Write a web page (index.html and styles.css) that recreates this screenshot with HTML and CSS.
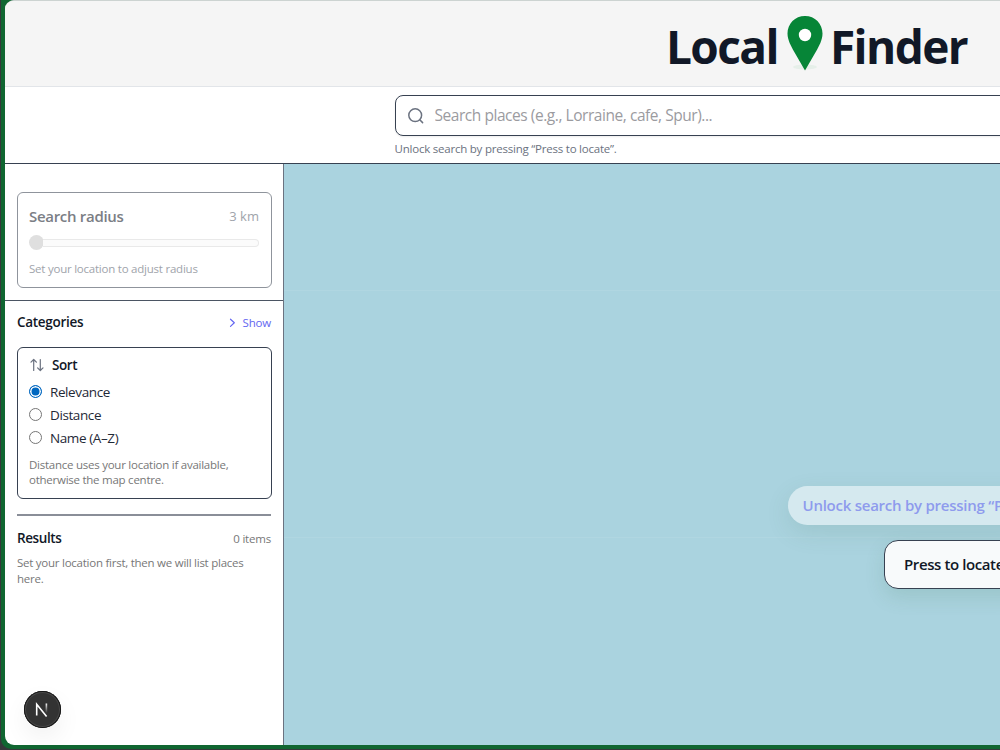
FILE: index.html
```
<!DOCTYPE html>
<html lang="en">
<head>
    <meta charset="UTF-8">
    <meta name="viewport" content="width=device-width, initial-scale=1.0">
    <title>Local Finder</title>
    <link rel="stylesheet" href="styles.css">
</head>
<body>
    <div class="frame">
        <div class="app">
            <header class="header">
                <h1 class="logo">
                    <span class="logo-text">Local</span>
                    <svg class="logo-pin" width="36" height="56" viewBox="0 0 36 56">
                        <ellipse cx="18" cy="51" rx="12" ry="2.5" fill="#e6efe9"/>
                        <path d="M18 0C8 0 .5 7.7.5 17.5c0 6.500 3.500 12.500 6.500 18L18 54.500l11-19c3-5.500 6.500-11.500 6.500-18C35.500 7.700 28 0 18 0z" fill="#068537"/>
                        <circle cx="18" cy="19" r="6.200" fill="#fff"/>
                    </svg>
                    <span class="logo-text">Finder</span>
                </h1>
            </header>

            <div class="search-bar">
                <div class="search">
                    <div class="search-box">
                        <svg width="18" height="18" viewBox="0 0 18 18" fill="none" stroke="#6b7280" stroke-width="1.500" stroke-linecap="round">
                            <circle cx="8.200" cy="8.200" r="6.400"/>
                            <path d="M13 13l2.600 2.600"/>
                        </svg>
                        <input class="search-input" type="text" placeholder="Search places (e.g., Lorraine, cafe, Spur)...">
                    </div>
                    <p class="search-hint">Unlock search by pressing “Press to locate”.</p>
                </div>
            </div>

            <div class="main">
                <aside class="sidebar">
                    <section class="radius-section">
                        <div class="card radius-card">
                            <div class="row">
                                <span class="radius-title">Search radius</span>
                                <span class="radius-value">3 km</span>
                            </div>
                            <div class="slider">
                                <span class="slider-thumb"></span>
                                <span class="slider-track"></span>
                            </div>
                            <p class="radius-hint">Set your location to adjust radius</p>
                        </div>
                    </section>

                    <section class="filters">
                        <div class="row">
                            <h2 class="title categories-title">Categories</h2>
                            <a class="show">
                                <svg width="7" height="10" viewBox="0 0 7 10" fill="none" stroke="#6366f1" stroke-width="1.200" stroke-linecap="round" stroke-linejoin="round">
                                    <path d="M1.500 1.200L5.300 4.800 1.500 8.400"/>
                                </svg>
                                <span>Show</span>
                            </a>
                        </div>

                        <div class="card sort-card">
                            <div class="sort-head">
                                <svg width="14" height="14" viewBox="0 0 14 14" fill="none" stroke="#6b7280" stroke-width="1.200" stroke-linecap="round" stroke-linejoin="round">
                                    <path d="M3.700 12.500V1.500M1 4.200l2.700-2.700 2.700 2.700M10.300 1.500v11M7.600 9.800l2.700 2.700L13 9.800"/>
                                </svg>
                                <h2 class="title">Sort</h2>
                            </div>
                            <label class="option"><span class="radio checked"></span><span>Relevance</span></label>
                            <label class="option"><span class="radio"></span><span>Distance</span></label>
                            <label class="option"><span class="radio"></span><span>Name (A–Z)</span></label>
                            <p class="note">Distance uses your location if available,<br>otherwise the map centre.</p>
                        </div>

                        <div class="results">
                            <div class="row">
                                <h2 class="title">Results</h2>
                                <span class="count">0 items</span>
                            </div>
                            <p class="note">Set your location first, then we will list places<br>here.</p>
                        </div>
                    </section>
                </aside>

                <div class="map">
                    <div class="map-actions">
                        <div class="map-hint">Unlock search by pressing “Press to locate”</div>
                        <button class="locate">Press to locate</button>
                    </div>
                </div>
            </div>
        </div>
        <div class="dev-badge">
            <svg width="37" height="37" viewBox="0 0 37 37" fill="none">
                <defs>
                    <linearGradient id="fade" x1="0" y1="12" x2="0" y2="22" gradientUnits="userSpaceOnUse">
                        <stop offset="0" stop-color="#fff"/>
                        <stop offset="1" stop-color="#fff" stop-opacity="0"/>
                    </linearGradient>
                </defs>
                <path d="M12.700 24.500V13.200L22.600 25.600" stroke="#fff" stroke-width="1.600"/>
                <path d="M22.400 12.500V22" stroke="url(#fade)" stroke-width="1.600"/>
            </svg>
        </div>
    </div>
</body>
</html>
```
FILE: styles.css
```
* {
    box-sizing: border-box;
}

body {
    font-family: "Open Sans", "Noto Sans", sans-serif;
    background: #35383a;
    color: #111827;
    margin: 0;
    height: 750px;
    overflow: hidden;
}

h1, h2, p {
    margin: 0;
}

.frame {
    position: relative;
    width: 1631px;
    height: 749px;
    margin-left: 1px;
    padding: 0 4px 4px;
    background: #106631;
    border-radius: 0 0 0 10px;
}

.app {
    display: flex;
    flex-direction: column;
    height: 745px;
    background: #fff;
    border-top: 1px solid #ccd3d1;
    border-radius: 9px;
    overflow: hidden;
}

.header {
    height: 86px;
    background: #f5f5f5;
    border-bottom: 1px solid #e2e5e9;
    display: flex;
    justify-content: center;
}

.logo {
    display: flex;
    align-items: flex-start;
    font-size: 46px;
    line-height: 60px;
    font-weight: 700;
    padding-top: 15px;
}

.logo-text {
    letter-spacing: -1.6px;
}

.logo-pin {
    margin: 0 7px 0 9px;
}

.search-bar {
    height: 77px;
    padding-top: 8px;
    border-bottom: 1px solid #374151;
    display: flex;
    justify-content: center;
}

.search {
    width: 844px;
}

.search-box {
    height: 41px;
    display: flex;
    align-items: center;
    gap: 10px;
    padding: 0 11px;
    border: 1px solid #374151;
    border-radius: 8px;
    box-shadow: 0 1px 2px rgba(0, 0, 0, 0.08);
}

.search-input {
    flex: 1;
    border: none;
    outline: none;
    padding: 0 0 2px;
    font-family: inherit;
    font-size: 15.5px;
    letter-spacing: -0.45px;
}

.search-input::placeholder {
    color: #9b9b9f;
}

.search-hint {
    margin-top: 5px;
    font-size: 11.5px;
    line-height: 16px;
    letter-spacing: -0.22px;
    color: #6b7280;
}

.main {
    flex: 1;
    display: flex;
}

.sidebar {
    width: 279px;
    border-right: 1px solid #6b7280;
}

.radius-section {
    height: 137px;
    padding: 28px 12px 0;
    border-bottom: 1px solid #4b5563;
}

.card {
    border: 1px solid #374151;
    border-radius: 6px;
    padding: 0 12px 0 11px;
    width: 255px;
}

.row {
    display: flex;
    justify-content: space-between;
    align-items: center;
}

.radius-card {
    height: 96px;
    padding-top: 11px;
    border-color: #8f949c;
}

.radius-title {
    font-size: 15px;
    line-height: 24px;
    font-weight: 600;
    color: #7b7e85;
    letter-spacing: -0.3px;
}

.radius-value {
    font-size: 13px;
    color: #a0a4ab;
}

.slider {
    display: flex;
    align-items: center;
    height: 15px;
    margin-top: 7px;
}

.slider-thumb {
    width: 15px;
    height: 15px;
    border-radius: 50%;
    background: #dfdfdf;
}

.slider-track {
    flex: 1;
    height: 8px;
    margin-left: -1px;
    background: #fbfbfb;
    border: 1px solid #e9e9e9;
    border-left: none;
    border-radius: 0 4px 4px 0;
}

.radius-hint {
    margin-top: 10px;
    font-size: 11.5px;
    line-height: 17px;
    letter-spacing: -0.23px;
    color: #a0a4ab;
}

.filters {
    padding: 11px 12px 0;
}

.title {
    font-size: 13.5px;
    line-height: 20px;
    font-weight: 600;
    letter-spacing: -0.4px;
}

.categories-title {
    letter-spacing: -0.3px;
}

.show {
    display: flex;
    align-items: center;
    gap: 7px;
    padding-top: 1px;
    margin-bottom: -1px;
    font-size: 11.5px;
    line-height: 20px;
    letter-spacing: -0.2px;
    color: #6366f1;
}

.sort-card {
    height: 152px;
    margin-top: 15px;
    padding-top: 7px;
}

.sort-head {
    display: flex;
    align-items: center;
    gap: 8px;
    padding-left: 1px;
    margin-bottom: 5px;
}

.option {
    display: flex;
    align-items: center;
    gap: 8px;
    height: 23.2px;
    font-size: 13.5px;
    letter-spacing: -0.4px;
    color: #1f2937;
}

.radio {
    width: 13px;
    height: 13px;
    border: 1px solid #767676;
    border-radius: 50%;
}

.radio.checked {
    border-color: #0067c0;
    background: #0067c0;
    box-shadow: inset 0 0 0 1.5px #fff;
}

.note {
    margin-top: 7px;
    font-size: 11.5px;
    line-height: 15.5px;
    letter-spacing: -0.25px;
    color: #777;
}

.results {
    margin-top: 15px;
    padding-top: 12px;
    border-top: 2px solid #8a8e98;
}

.count {
    font-size: 11.5px;
    letter-spacing: -0.2px;
    color: #777;
}

.map {
    flex: 1;
    display: flex;
    justify-content: center;
    /* tile seams */
    background:
        linear-gradient(#b0d6e1, #b0d6e1) 0 126px / 100% 1px no-repeat,
        linear-gradient(#b0d6e1, #b0d6e1) 0 373px / 100% 1px no-repeat,
        #aad3df;
}

.map-actions {
    padding-top: 322px;
    display: flex;
    flex-direction: column;
    align-items: center;
}

.map-hint {
    width: 337px;
    height: 39px;
    padding-left: 15px;
    border-radius: 20px;
    background: rgba(255, 255, 255, 0.5);
    box-shadow: 0 8px 24px rgba(60, 110, 70, 0.12);
    font-size: 15px;
    line-height: 39px;
    font-weight: 600;
    letter-spacing: -0.25px;
    white-space: nowrap;
    color: #8e9bed;
}

.locate {
    width: 144px;
    height: 49px;
    margin-top: 15px;
    padding: 0 0 1px 19px;
    border: 1px solid #374151;
    border-radius: 14px;
    background: #f8fafb;
    box-shadow: 0 8px 20px rgba(60, 110, 70, 0.14);
    font-family: inherit;
    font-size: 15px;
    font-weight: 600;
    letter-spacing: -0.4px;
    text-align: left;
    white-space: nowrap;
    color: #111827;
}

/* dev tools indicator floats over the sidebar */
.dev-badge {
    position: absolute;
    left: 23px;
    bottom: 21px;
    width: 37px;
    height: 37px;
    border-radius: 50%;
    background: #333;
    box-shadow: 0 0 0 1px #171717 inset, 0 0 0 2px #484848 inset, 0 10px 24px rgba(0, 0, 0, 0.06);
}
```
